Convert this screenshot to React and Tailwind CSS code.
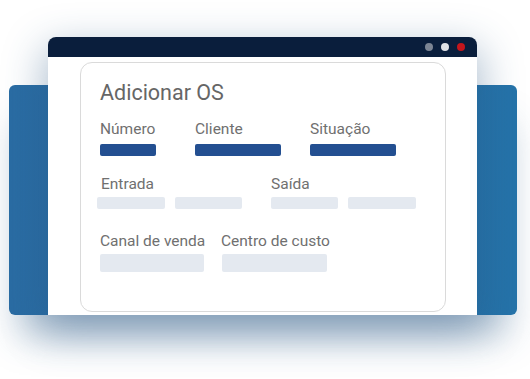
import React from 'react';

const font = { fontFamily: 'Roboto, "Noto Sans", sans-serif' };

function Label({ children, className = '' }) {
  return (
    <span className={`block text-[15.5px] leading-[18px] text-[#707070] whitespace-nowrap ${className}`}>
      {children}
    </span>
  );
}

export default function App() {
  return (
    <div className="relative w-[530px] h-[379px] bg-white overflow-hidden" style={font}>
      {/* blue backdrop */}
      <div className="absolute left-[9px] top-[85px] w-[508px] h-[230px] rounded-[6px] bg-gradient-to-r from-[#2a6ca3] to-[#2573a9] shadow-[0_30px_35px_-10px_rgba(40,90,135,0.35)]" />

      {/* window */}
      <div className="relative ml-[48px] mt-[37px] w-[429px] h-[278px] flex flex-col rounded-t-[8px] bg-white shadow-[0_14px_40px_4px_rgba(40,85,130,0.38)]">
        <div className="h-[20px] bg-[#0a1e3c] rounded-t-[8px] flex items-center justify-end gap-2 pr-[12px]">
          <span className="w-2 h-2 rounded-full bg-[#7c8594]" />
          <span className="w-2 h-2 rounded-full bg-[#dfe2e7]" />
          <span className="w-2 h-2 rounded-full bg-[#c4161c]" />
        </div>

        <div className="flex-1 pl-[32px] pr-[31px] pt-[5px] pb-[3px]">
          <div className="h-full border border-[#dadada] rounded-[12px] pl-[19px] pt-[17px]">
            <h2 className="text-[21.5px] leading-[26px] text-[#666] font-normal">Adicionar OS</h2>

            {/* row 1 */}
            <div className="flex mt-[14px]">
              <div className="w-[95px]">
                <Label>Número</Label>
                <div className="mt-[6px] w-[56px] h-[12px] rounded-[2px] bg-[#234f91]" />
              </div>
              <div className="w-[115px]">
                <Label>Cliente</Label>
                <div className="mt-[6px] w-[86px] h-[12px] rounded-[2px] bg-[#234f91]" />
              </div>
              <div>
                <Label>Situação</Label>
                <div className="mt-[6px] w-[86px] h-[12px] rounded-[2px] bg-[#234f91]" />
              </div>
            </div>

            {/* row 2 */}
            <div className="flex mt-[19px] -ml-[3px]">
              <div className="w-[174px]">
                <Label className="ml-[4px]">Entrada</Label>
                <div className="mt-[4px] flex gap-[10px]">
                  <div className="w-[68px] h-[12px] rounded-[2px] bg-[#e4e9f0]" />
                  <div className="w-[67px] h-[12px] rounded-[2px] bg-[#e4e9f0]" />
                </div>
              </div>
              <div>
                <Label>Saída</Label>
                <div className="mt-[4px] flex gap-[10px]">
                  <div className="w-[67px] h-[12px] rounded-[2px] bg-[#e4e9f0]" />
                  <div className="w-[68px] h-[12px] rounded-[2px] bg-[#e4e9f0]" />
                </div>
              </div>
            </div>

            {/* row 3 */}
            <div className="flex mt-[23px]">
              <div className="w-[121px]">
                <Label>Canal de venda</Label>
                <div className="mt-[4px] w-[104px] h-[18px] rounded-[2px] bg-[#e4e9f0]" />
              </div>
              <div>
                <Label>Centro de custo</Label>
                <div className="mt-[4px] ml-[1px] w-[105px] h-[18px] rounded-[2px] bg-[#e4e9f0]" />
              </div>
            </div>
          </div>
        </div>
      </div>
    </div>
  );
}
